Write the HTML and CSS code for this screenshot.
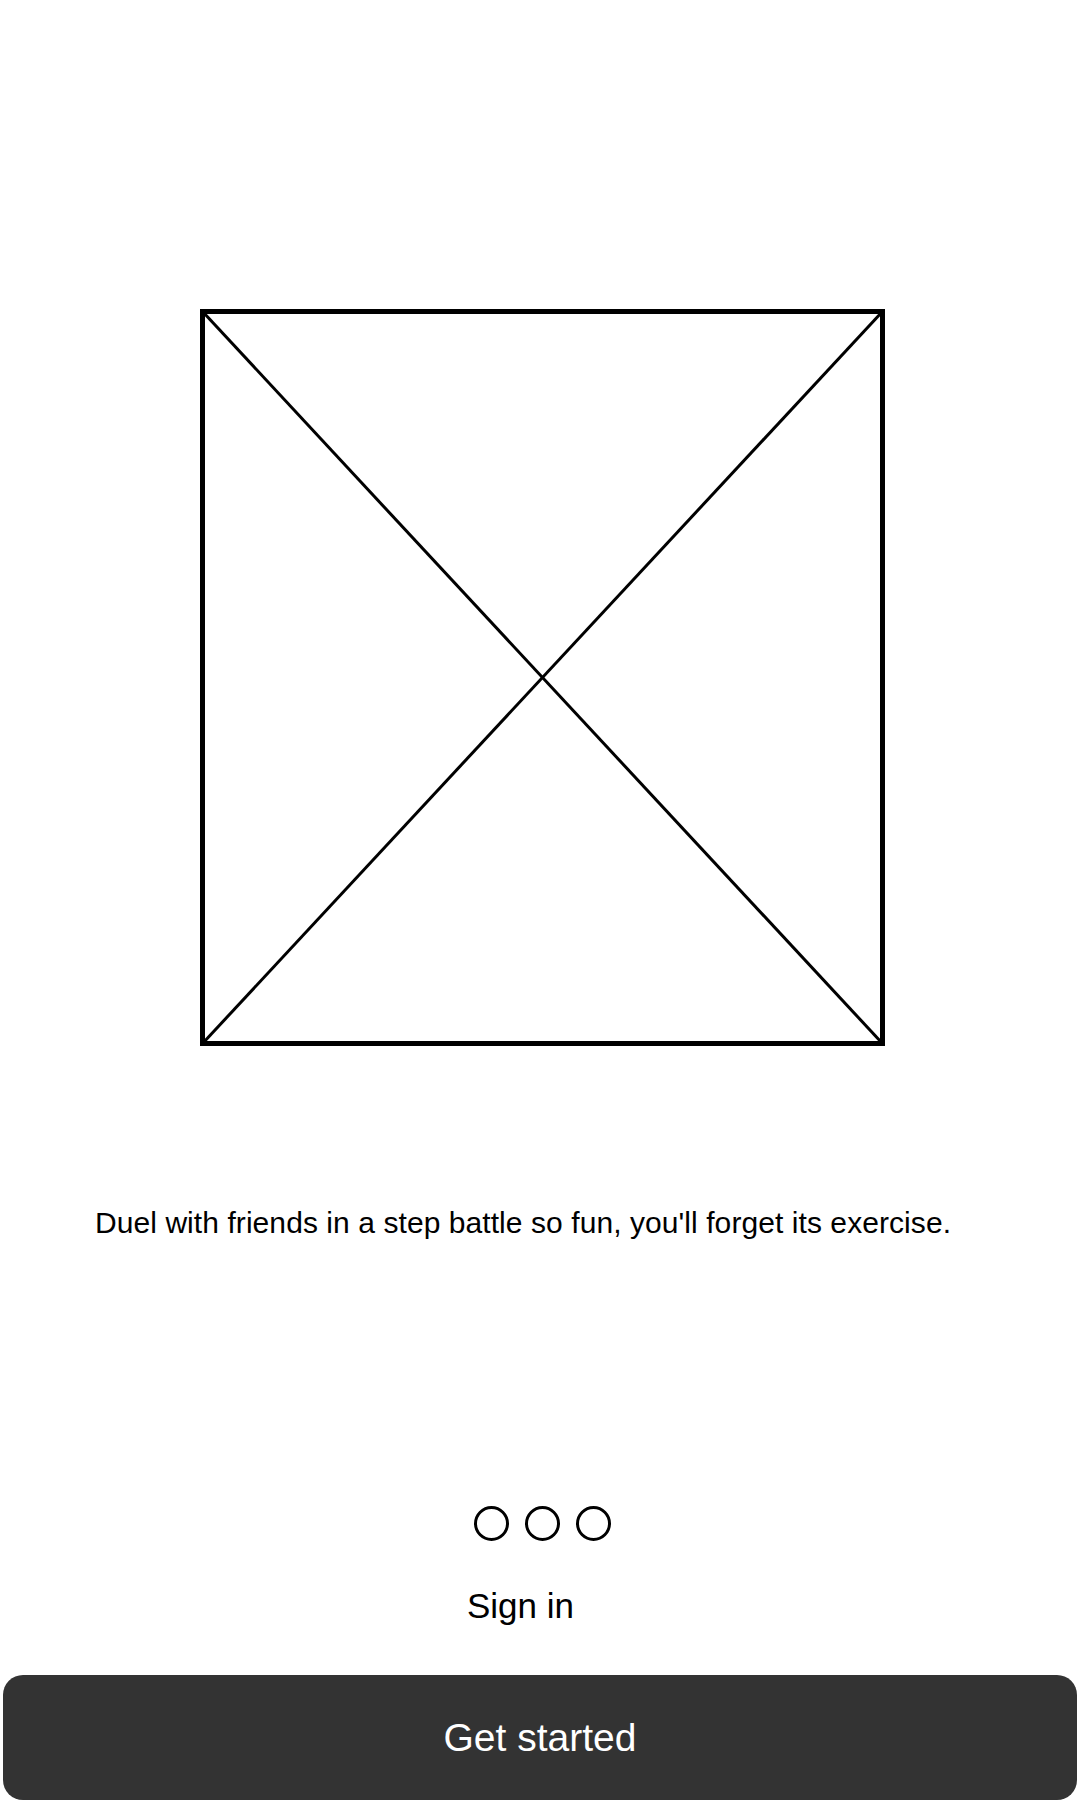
FILE: index.html
```html
<!DOCTYPE html>
<html>
<head>
<meta charset="utf-8">
<link rel="stylesheet" href="styles.css">
</head>
<body>
<div class="screen">
  <div class="hero">
    <svg class="placeholder" width="685" height="737" viewBox="0 0 685 737">
      <rect x="2.5" y="2.5" width="680" height="732" fill="none" stroke="#000" stroke-width="5"/>
      <line x1="3" y1="3" x2="682" y2="734" stroke="#000" stroke-width="3"/>
      <line x1="682" y1="3" x2="3" y2="734" stroke="#000" stroke-width="3"/>
    </svg>
  </div>
  <p class="tagline">Duel with friends in a step battle so fun, you'll forget its exercise.</p>
  <div class="dots">
    <span class="dot"></span>
    <span class="dot"></span>
    <span class="dot"></span>
  </div>
  <div class="signin">Sign in</div>
  <div class="cta">Get started</div>
</div>
</body>
</html>
```

FILE: styles.css
```css
html, body {
  margin: 0;
  padding: 0;
  background: #fff;
}
.screen {
  width: 1080px;
  height: 1800px;
  overflow: hidden;
  display: flex;
  flex-direction: column;
  font-family: "Liberation Sans", Arial, sans-serif;
  color: #000;
}
.hero {
  padding-top: 309px;
  padding-left: 200px;
  display: flex;
}
.placeholder {
  display: block;
}
.tagline {
  margin: 162px 0 0 0;
  padding-left: 95px;
  font-size: 30px;
  letter-spacing: 0.07px;
  line-height: 30px;
}
.dots {
  margin-top: 268px;
  padding-left: 474px;
  display: flex;
  gap: 16px;
}
.dot {
  width: 35px;
  height: 35px;
  box-sizing: border-box;
  border: 3px solid #000;
  border-radius: 50%;
}
.signin {
  margin-top: 47px;
  padding-left: 467px;
  font-size: 35px;
  line-height: 35px;
}
.cta {
  margin: 52px 3px 0 3px;
  height: 125px;
  flex-shrink: 0;
  background: #333;
  border-radius: 20px;
  color: #fff;
  font-size: 39px;
  line-height: 39px;
  display: flex;
  align-items: center;
  justify-content: center;
}
```
